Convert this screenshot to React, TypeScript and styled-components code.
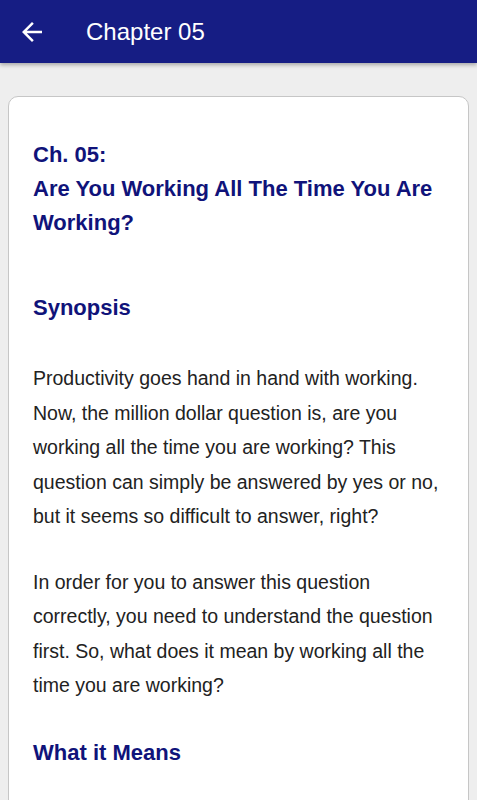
import React from "react";
import styled, { createGlobalStyle } from "styled-components";

const GlobalStyle = createGlobalStyle`
  html, body {
    margin: 0;
    padding: 0;
    background: #eeeeee;
    font-family: "Liberation Sans", Arial, sans-serif;
  }
`;

function BackIcon() {
  return (
    <svg width="30" height="30" viewBox="0 0 24 24" fill="#ffffff">
      <path d="M20 11H7.83l5.59-5.59L12 4l-8 8 8 8 1.41-1.41L7.83 13H20v-2z" />
    </svg>
  );
}

function App() {
  return (
    <Page>
      <GlobalStyle />
      <TopBar>
        <BackButton>
          <BackIcon />
        </BackButton>
        <Title>Chapter 05</Title>
      </TopBar>
      {/* header end */}
      <Content>
        <Card>
          <ChapterTitle>
            Ch. 05:
            <br />
            Are You Working All The Time You Are Working?
          </ChapterTitle>
          <Section>Synopsis</Section>
          <Paragraph>
            Productivity goes hand in hand with working. Now, the million dollar
            question is, are you working all the time you are working? This
            question can simply be answered by yes or no, but it seems so
            difficult to answer, right?
          </Paragraph>
          <Paragraph $gap={31}>
            In order for you to answer this question correctly, you need to
            understand the question first. So, what does it mean by working all
            the time you are working?
          </Paragraph>
          <Section $gap={33}>What it Means</Section>
        </Card>
      </Content>
    </Page>
  );
}

const Page = styled.div`
  height: 100vh;
  overflow: hidden;
  background: #eeeeee;
`;

const TopBar = styled.header`
  height: 63px;
  display: flex;
  align-items: center;
  background-color: #161d84;
  box-shadow: 0 2px 4px rgba(0, 0, 0, 0.3);
  position: relative;
  z-index: 1;
`;

const BackButton = styled.div`
  width: 30px;
  height: 30px;
  margin-left: 17px;
  display: flex;
  align-items: center;
  justify-content: center;
`;

const Title = styled.h1`
  margin: 0 0 0 39px;
  font-size: 24px;
  font-weight: 400;
  color: #ffffff;
`;

const Content = styled.main`
  padding: 33px 8px 0;
`;

const Card = styled.section`
  background: #ffffff;
  border: 1px solid #c6c6c6;
  border-radius: 10px;
  padding: 41px 24px 40px;
  min-height: 700px;
`;

const ChapterTitle = styled.h2`
  margin: 0;
  font-size: 22px;
  font-weight: 700;
  line-height: 34px;
  color: #10137a;
`;

const Section = styled.h3<{ $gap?: number }>`
  margin: ${(p) => p.$gap ?? 51}px 0 0;
  font-size: 22px;
  font-weight: 700;
  line-height: 34px;
  color: #10137a;
`;

const Paragraph = styled.p<{ $gap?: number }>`
  margin: ${(p) => p.$gap ?? 36}px 0 0;
  font-size: 19.5px;
  line-height: 34.5px;
  color: #222222;
`;

export default App;
